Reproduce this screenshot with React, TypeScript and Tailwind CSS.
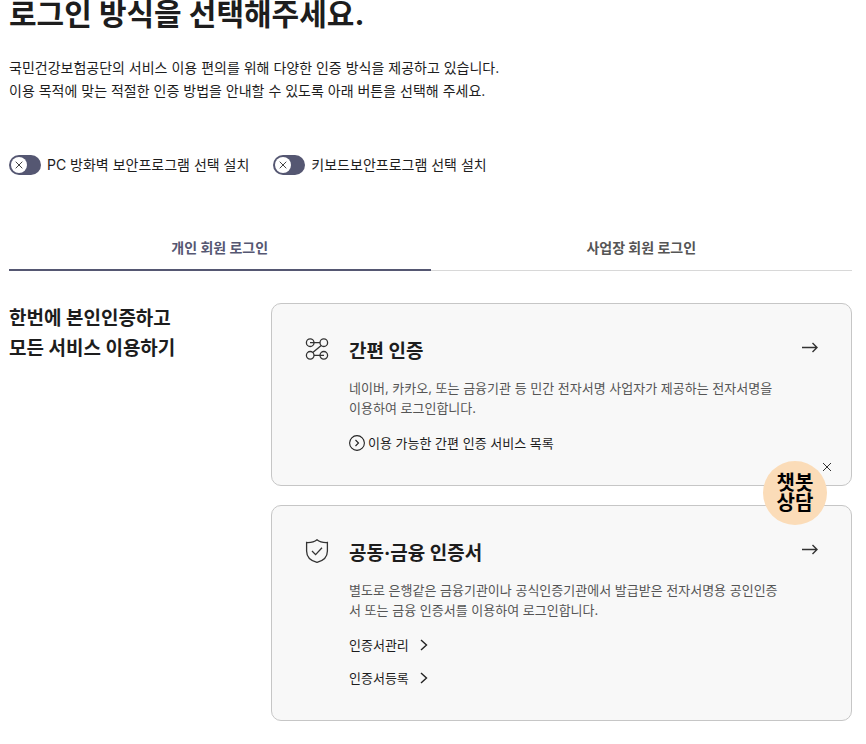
import React, { useState } from 'react';

interface SwitchProps {
  id: string;
  label: string;
}

const Switch: React.FC<SwitchProps> = ({ id, label }) => {
  const [on, setOn] = useState(false);

  return (
    <div className="flex items-center gap-[6px]">
      <span className="relative flex">
        <input
          id={id}
          type="checkbox"
          role="switch"
          checked={on}
          onChange={() => setOn(!on)}
          className="h-5 w-8 cursor-pointer appearance-none rounded-full bg-[#555772]"
        />
        <span
          className={`pointer-events-none absolute top-[2px] flex h-4 w-4 items-center justify-center rounded-full bg-white ${
            on ? 'right-[2px]' : 'left-[2px]'
          }`}
        >
          <svg width="8" height="8" viewBox="0 0 8 8" fill="none" stroke="#444" strokeWidth="1">
            <path d="M.7.7l6.6 6.6M7.3.7L.7 7.300" />
          </svg>
        </span>
      </span>
      <label htmlFor={id} className="cursor-pointer text-sm leading-5">
        {label}
      </label>
    </div>
  );
};

const NodesIcon = () => (
  <svg width="24" height="24" viewBox="0 0 24 24" fill="none" stroke="#333" strokeWidth="1.3">
    <circle cx="5.2" cy="5.7" r="3.8" />
    <circle cx="18.8" cy="5.7" r="3.8" />
    <circle cx="5.2" cy="18.3" r="3.8" />
    <circle cx="18.8" cy="18.3" r="3.8" />
    <path d="M5 5.7h10M16.2 8.5L7.8 15.5M9 18.3h10" />
  </svg>
);

const ShieldIcon = () => (
  <svg width="24" height="24" viewBox="0 0 24 24" fill="none" stroke="#333" strokeWidth="1.3">
    <path d="M12 .8C9.8 2.6 6 3.700 1.600 3.500V12c0 5.800 4.200 9.800 10.400 11.400C18.200 21.800 22.400 17.800 22.400 12V3.500C18 3.700 14.200 2.600 12 .8z" />
    <path d="M7 12l3.600 3.600 6.400-6.800" />
  </svg>
);

const ArrowIcon = () => (
  <svg width="16" height="16" viewBox="0 0 16 16" fill="none" stroke="#333" strokeWidth="1.4">
    <path d="M0 8.500h15M10.500 4l4.500 4.500-4.500 4.500" />
  </svg>
);

const ChevronIcon = () => (
  <svg width="8" height="12" viewBox="0 0 8 12" fill="none" stroke="#222" strokeWidth="1.4">
    <path d="M1 1l5.500 5L1 11" />
  </svg>
);

const CircleChevronIcon = () => (
  <svg width="16" height="16" viewBox="0 0 16 16" fill="none" stroke="#222">
    <circle cx="8" cy="8" r="7.400" strokeWidth="1.1" />
    <path d="M6.500 5l3 3-3 3" strokeWidth="1.1" />
  </svg>
);

interface LoginCardProps {
  icon: React.ReactNode;
  title: string;
  description: string;
  children: React.ReactNode;
}

const LoginCard: React.FC<LoginCardProps> = ({ icon, title, description, children }) => {
  return (
    <section className="flex items-start rounded-[10px] border border-[#c6c6c6] bg-[#f8f8f8] px-[33px] py-8">
      <div className="mt-px mr-5 shrink-0">{icon}</div>
      <div className="min-w-0 flex-1">
        <h3 className="text-[19px] leading-8 font-bold">{title}</h3>
        <p className="mt-[10px] text-[13px] leading-5 break-all text-[#555]">{description}</p>
        <div className="mt-[15px] flex flex-col items-start gap-[13px] text-[13px] leading-5">
          {children}
        </div>
      </div>
      <a href="#login" aria-label={title} className="mt-[3px] ml-5 shrink-0">
        <ArrowIcon />
      </a>
    </section>
  );
};

const tabs = ['개인 회원 로그인', '사업장 회원 로그인'];

const App: React.FC = () => {
  const [activeTab, setActiveTab] = useState(0);
  const [chatOpen, setChatOpen] = useState(true);

  return (
    <main className="bg-white pr-[14px] pb-6 pl-[9px] font-['Inter','Noto_Sans_CJK_KR',sans-serif] text-[#1d1d1d]">
      <h1 className="text-[30px] leading-7 font-bold">로그인 방식을 선택해주세요.</h1>
      <p className="mt-7 text-sm leading-[23px]">
        국민건강보험공단의 서비스 이용 편의를 위해 다양한 인증 방식을 제공하고 있습니다.
        <br />
        이용 목적에 맞는 적절한 인증 방법을 안내할 수 있도록 아래 버튼을 선택해 주세요.
      </p>

      <div className="mt-[53px] flex flex-wrap gap-6">
        <Switch id="firewall" label="PC 방화벽 보안프로그램 선택 설치" />
        <Switch id="keyboard" label="키보드보안프로그램 선택 설치" />
      </div>

      <div role="tablist" className="mt-12 flex">
        {tabs.map((tab, i) => (
          <button
            key={tab}
            type="button"
            role="tab"
            aria-selected={activeTab === i}
            onClick={() => setActiveTab(i)}
            className={`h-12 flex-1 cursor-pointer pt-[3px] text-sm font-bold ${
              activeTab === i
                ? 'border-b-2 border-[#555772] text-[#555772]'
                : 'border-b border-[#d8d8d8] text-[#555]'
            }`}
          >
            {tab}
          </button>
        ))}
      </div>

      <div className="mt-8 flex">
        <h2 className="w-[262px] shrink-0 pt-px text-[19px] leading-[30px] font-bold">
          한번에 본인인증하고
          <br />
          모든 서비스 이용하기
        </h2>
        <div className="flex min-w-0 flex-1 flex-col gap-[19px]">
          <LoginCard
            icon={<NodesIcon />}
            title="간편 인증"
            description="네이버, 카카오, 또는 금융기관 등 민간 전자서명 사업자가 제공하는 전자서명을 이용하여 로그인합니다."
          >
            <a href="#services" className="flex items-center gap-[3px]">
              <CircleChevronIcon />
              이용 가능한 간편 인증 서비스 목록
            </a>
          </LoginCard>
          <LoginCard
            icon={<ShieldIcon />}
            title="공동·금융 인증서"
            description="별도로 은행같은 금융기관이나 공식인증기관에서 발급받은 전자서명용 공인인증서 또는 금융 인증서를 이용하여 로그인합니다."
          >
            <a href="#manage" className="flex items-center gap-[11px]">
              인증서관리
              <ChevronIcon />
            </a>
            <a href="#register" className="flex items-center gap-[11px]">
              인증서등록
              <ChevronIcon />
            </a>
          </LoginCard>
        </div>
      </div>

      {chatOpen && (
        <div className="fixed top-[461px] right-[39px]">
          <button
            type="button"
            className="flex h-16 w-16 cursor-pointer items-center justify-center rounded-full bg-[#fbdcb8] text-xl leading-5 font-bold text-black"
          >
            챗봇
            <br />
            상담
          </button>
          <button
            type="button"
            aria-label="닫기"
            onClick={() => setChatOpen(false)}
            className="absolute top-0 -right-[6px] flex h-3 w-3 cursor-pointer items-center justify-center"
          >
            <svg width="10" height="10" viewBox="0 0 10 10" fill="none" stroke="#333">
              <path d="M1 1l8 8M9 1L1 9" />
            </svg>
          </button>
        </div>
      )}
    </main>
  );
};

export default App;
